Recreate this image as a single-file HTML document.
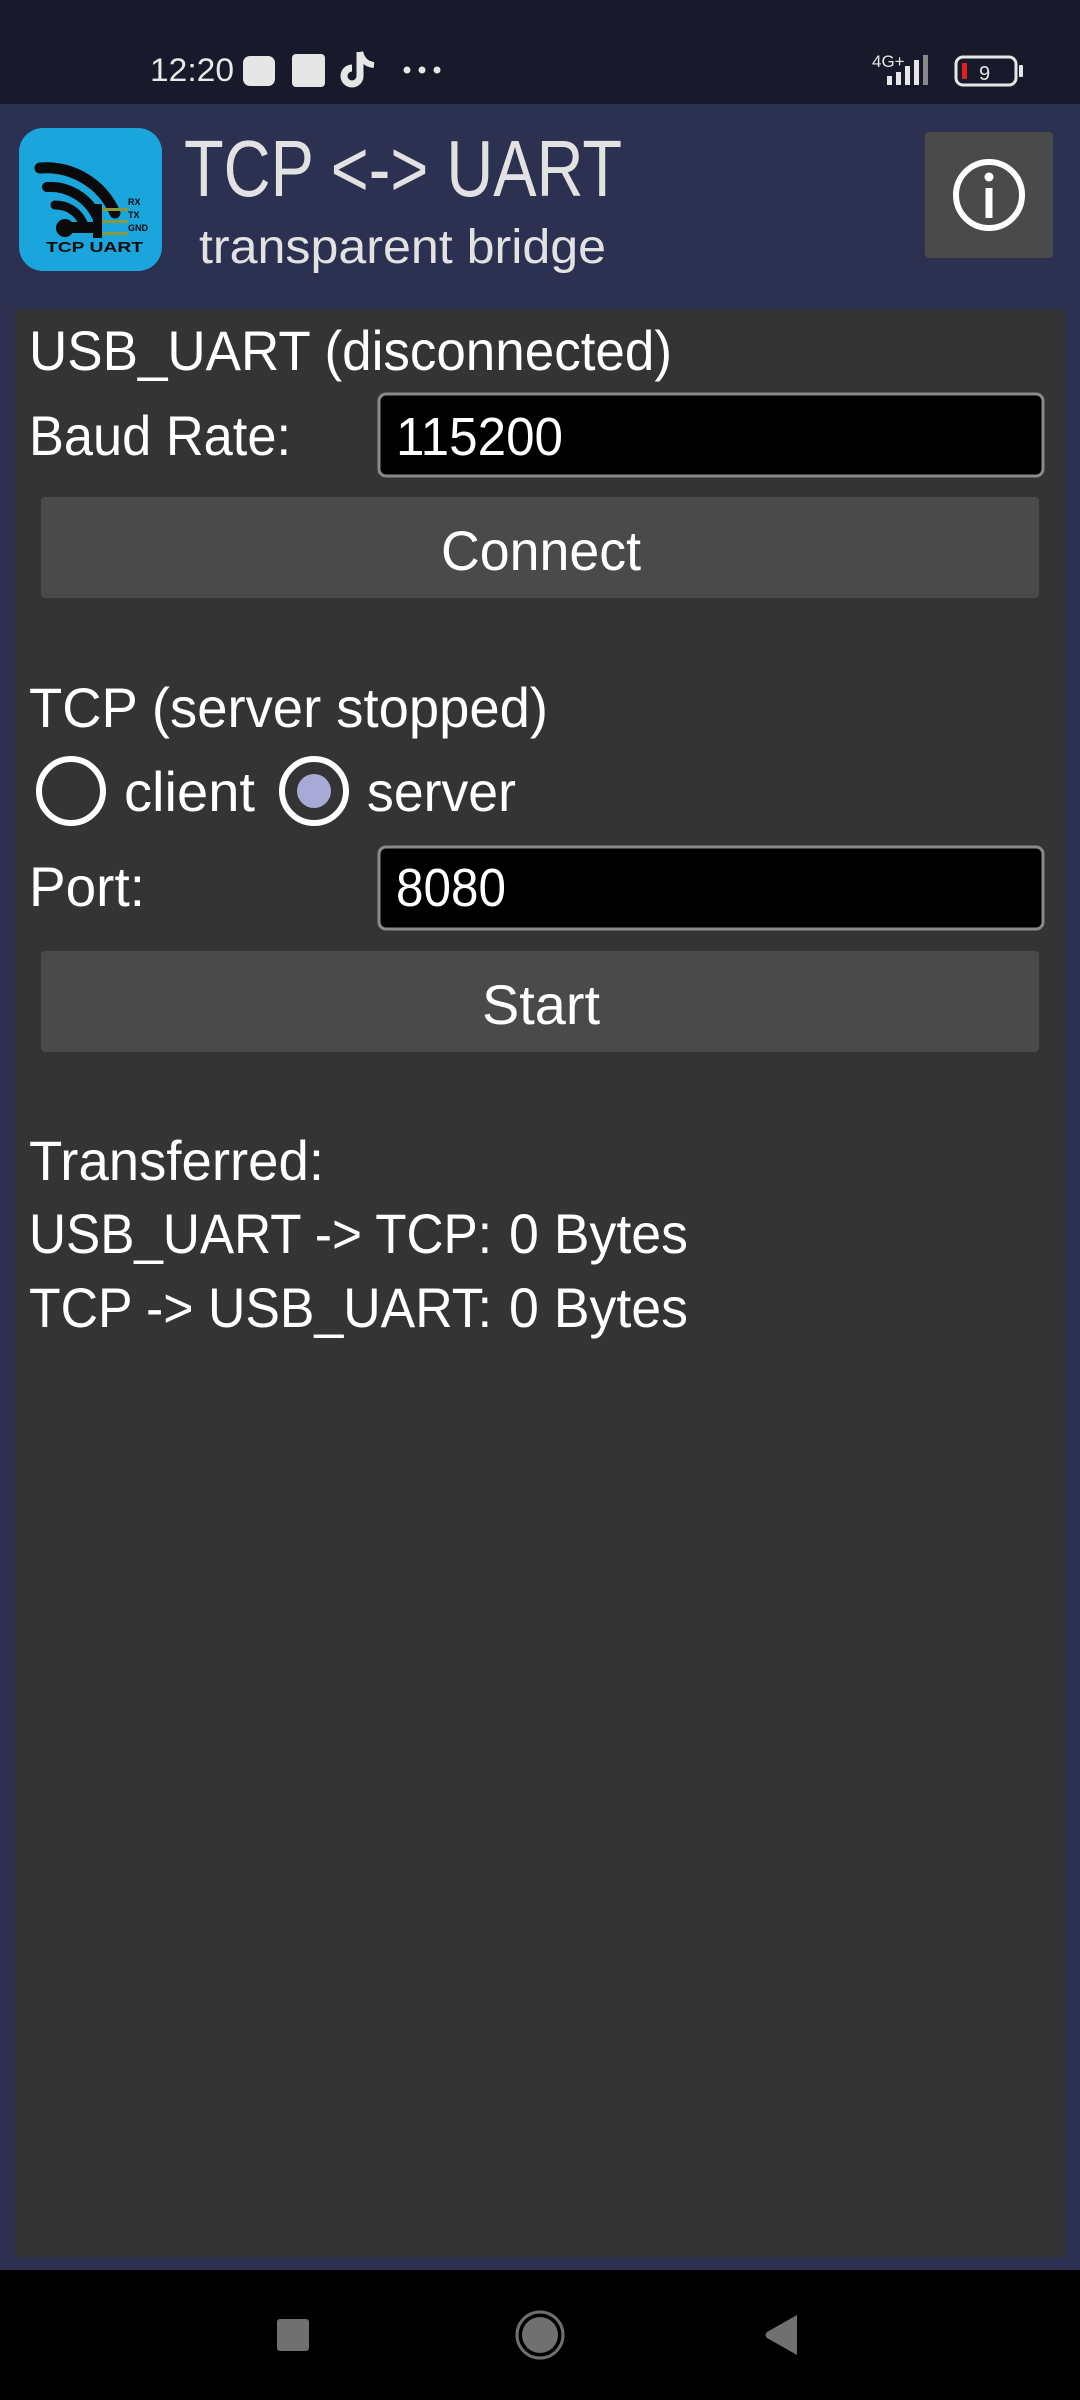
<!DOCTYPE html>
<html><head><meta charset="utf-8"><style>
html,body{margin:0;padding:0;background:#181a2b;}
body{width:1080px;height:2400px;overflow:hidden;}
svg{display:block;}
text{font-family:"Liberation Sans",sans-serif;}
</style></head><body>
<svg width="1080" height="2400" viewBox="0 0 1080 2400" xmlns="http://www.w3.org/2000/svg">
<rect x="0" y="0" width="1080" height="104" fill="#181a2b"/>
<rect x="0" y="104" width="1080" height="2166" fill="#2c3152"/>
<rect x="0" y="2270" width="1080" height="130" fill="#000"/>
<rect x="15" y="310" width="1050" height="1947" fill="#343434"/>

<!-- status bar -->
<text x="150" y="81" font-size="32" fill="#e8e8e8" textLength="84" lengthAdjust="spacingAndGlyphs">12:20</text>
<rect x="243" y="56" width="32" height="30" rx="7" fill="#e6e6e6"/>
<rect x="292" y="54" width="33" height="33" rx="4" fill="#e6e6e6"/>
<path d="M360 52 v24 a8 8 0 1 1 -8 -8" stroke="#e6e6e6" stroke-width="7" fill="none"/>
<path d="M360 52 q3 12 14 13" stroke="#e6e6e6" stroke-width="6" fill="none"/>
<circle cx="407" cy="70" r="3.5" fill="#e6e6e6"/><circle cx="422" cy="70" r="3.5" fill="#e6e6e6"/><circle cx="437" cy="70" r="3.5" fill="#e6e6e6"/>
<text x="872" y="67" font-size="17" fill="#e6e6e6">4G+</text>
<rect x="887" y="76" width="5" height="9" fill="#e6e6e6"/><rect x="896" y="72" width="5" height="13" fill="#e6e6e6"/><rect x="905" y="66" width="5" height="19" fill="#e6e6e6"/><rect x="914" y="60" width="5" height="25" fill="#e6e6e6"/><rect x="923" y="55" width="5" height="30" fill="#888"/>
<rect x="956" y="57" width="60" height="28" rx="7" fill="none" stroke="#e6e6e6" stroke-width="3"/>
<rect x="1019" y="65" width="4" height="12" rx="1" fill="#e6e6e6"/>
<rect x="962" y="63" width="5" height="16" fill="#e02020"/>
<text x="979" y="80" font-size="20" fill="#e6e6e6">9</text>

<!-- logo -->
<rect x="19" y="128" width="143" height="143" rx="24" fill="#1aa5dc"/>
<g fill="none" stroke="#0a0a0a" stroke-linecap="round">
<path d="M40 168 a75 75 0 0 1 75 45" stroke-width="11"/>
<path d="M47 187 a52 52 0 0 1 50 30" stroke-width="10"/>
<path d="M55 205 a30 30 0 0 1 28 18" stroke-width="9"/>
</g>
<circle cx="65" cy="228" r="9" fill="#0a0a0a"/>
<rect x="60" y="222" width="40" height="11" fill="#0a0a0a"/>
<rect x="93" y="204" width="9" height="34" fill="#0a0a0a"/>
<rect x="102" y="208" width="26" height="3" fill="#8a9a3a"/><rect x="102" y="220" width="26" height="3" fill="#8a9a3a"/><rect x="102" y="232" width="26" height="3" fill="#8a9a3a"/>
<text x="128" y="205" font-size="9" font-weight="bold" fill="#0a0a0a">RX</text>
<text x="128" y="218" font-size="9" font-weight="bold" fill="#0a0a0a">TX</text>
<text x="128" y="231" font-size="9" font-weight="bold" fill="#0a0a0a">GND</text>
<text x="46" y="252" font-size="15" font-weight="bold" fill="#0a0a0a" textLength="97" lengthAdjust="spacingAndGlyphs">TCP  UART</text>

<!-- header text -->
<text x="184" y="196" font-size="80" fill="#e2e2e2" textLength="438" lengthAdjust="spacingAndGlyphs">TCP &lt;-&gt; UART</text>
<text x="199" y="263" font-size="48" fill="#e2e2e2" textLength="407" lengthAdjust="spacingAndGlyphs">transparent bridge</text>

<!-- info button -->
<rect x="925" y="132" width="128" height="126" rx="4" fill="#4a4a4a"/>
<circle cx="989" cy="195" r="33" fill="none" stroke="#fff" stroke-width="6"/>
<circle cx="989" cy="177" r="4.5" fill="#fff"/>
<rect x="985.5" y="188" width="7" height="30" fill="#fff"/>

<!-- USB section -->
<text x="29" y="370" font-size="56" fill="#fff" textLength="643" lengthAdjust="spacingAndGlyphs">USB_UART (disconnected)</text>
<text x="29" y="455" font-size="56" fill="#fff" textLength="262" lengthAdjust="spacingAndGlyphs">Baud Rate:</text>
<rect x="379" y="394" width="664" height="82" rx="7" fill="#000" stroke="#8a8a8a" stroke-width="3"/>
<text x="396" y="455" font-size="54" fill="#fff" textLength="167" lengthAdjust="spacingAndGlyphs">115200</text>
<rect x="41" y="497" width="998" height="101" rx="4" fill="#4a4a4a"/>
<text x="441" y="570" font-size="56" fill="#fff" textLength="200" lengthAdjust="spacingAndGlyphs">Connect</text>

<!-- TCP section -->
<text x="29" y="727" font-size="56" fill="#fff" textLength="519" lengthAdjust="spacingAndGlyphs">TCP (server stopped)</text>
<circle cx="71" cy="791" r="32" fill="none" stroke="#fff" stroke-width="6"/>
<text x="124" y="811" font-size="56" fill="#fff" textLength="131" lengthAdjust="spacingAndGlyphs">client</text>
<circle cx="314" cy="791" r="32" fill="none" stroke="#fff" stroke-width="6"/>
<circle cx="314" cy="791" r="17" fill="#a9a9d8"/>
<text x="367" y="811" font-size="56" fill="#fff" textLength="149" lengthAdjust="spacingAndGlyphs">server</text>
<text x="29" y="906" font-size="56" fill="#fff" textLength="116" lengthAdjust="spacingAndGlyphs">Port:</text>
<rect x="379" y="847" width="664" height="82" rx="7" fill="#000" stroke="#8a8a8a" stroke-width="3"/>
<text x="396" y="906" font-size="54" fill="#fff" textLength="110" lengthAdjust="spacingAndGlyphs">8080</text>
<rect x="41" y="951" width="998" height="101" rx="4" fill="#4a4a4a"/>
<text x="482" y="1024" font-size="56" fill="#fff" textLength="118" lengthAdjust="spacingAndGlyphs">Start</text>

<!-- transferred -->
<text x="29" y="1180" font-size="56" fill="#fff" textLength="295" lengthAdjust="spacingAndGlyphs">Transferred:</text>
<text x="29" y="1253" font-size="56" fill="#fff" textLength="463" lengthAdjust="spacingAndGlyphs">USB_UART -&gt; TCP:</text>
<text x="509" y="1253" font-size="56" fill="#fff" textLength="179" lengthAdjust="spacingAndGlyphs">0 Bytes</text>
<text x="29" y="1327" font-size="56" fill="#fff" textLength="463" lengthAdjust="spacingAndGlyphs">TCP -&gt; USB_UART:</text>
<text x="509" y="1327" font-size="56" fill="#fff" textLength="179" lengthAdjust="spacingAndGlyphs">0 Bytes</text>

<!-- nav bar -->
<rect x="277" y="2319" width="32" height="32" rx="3" fill="#707070"/>
<circle cx="540" cy="2335" r="23" fill="none" stroke="#707070" stroke-width="3"/>
<circle cx="540" cy="2335" r="18" fill="#707070"/>
<path d="M797 2315 v40 l-30 -17 q-3 -3 0 -6 z" fill="#707070"/>
</svg>
</body></html>
